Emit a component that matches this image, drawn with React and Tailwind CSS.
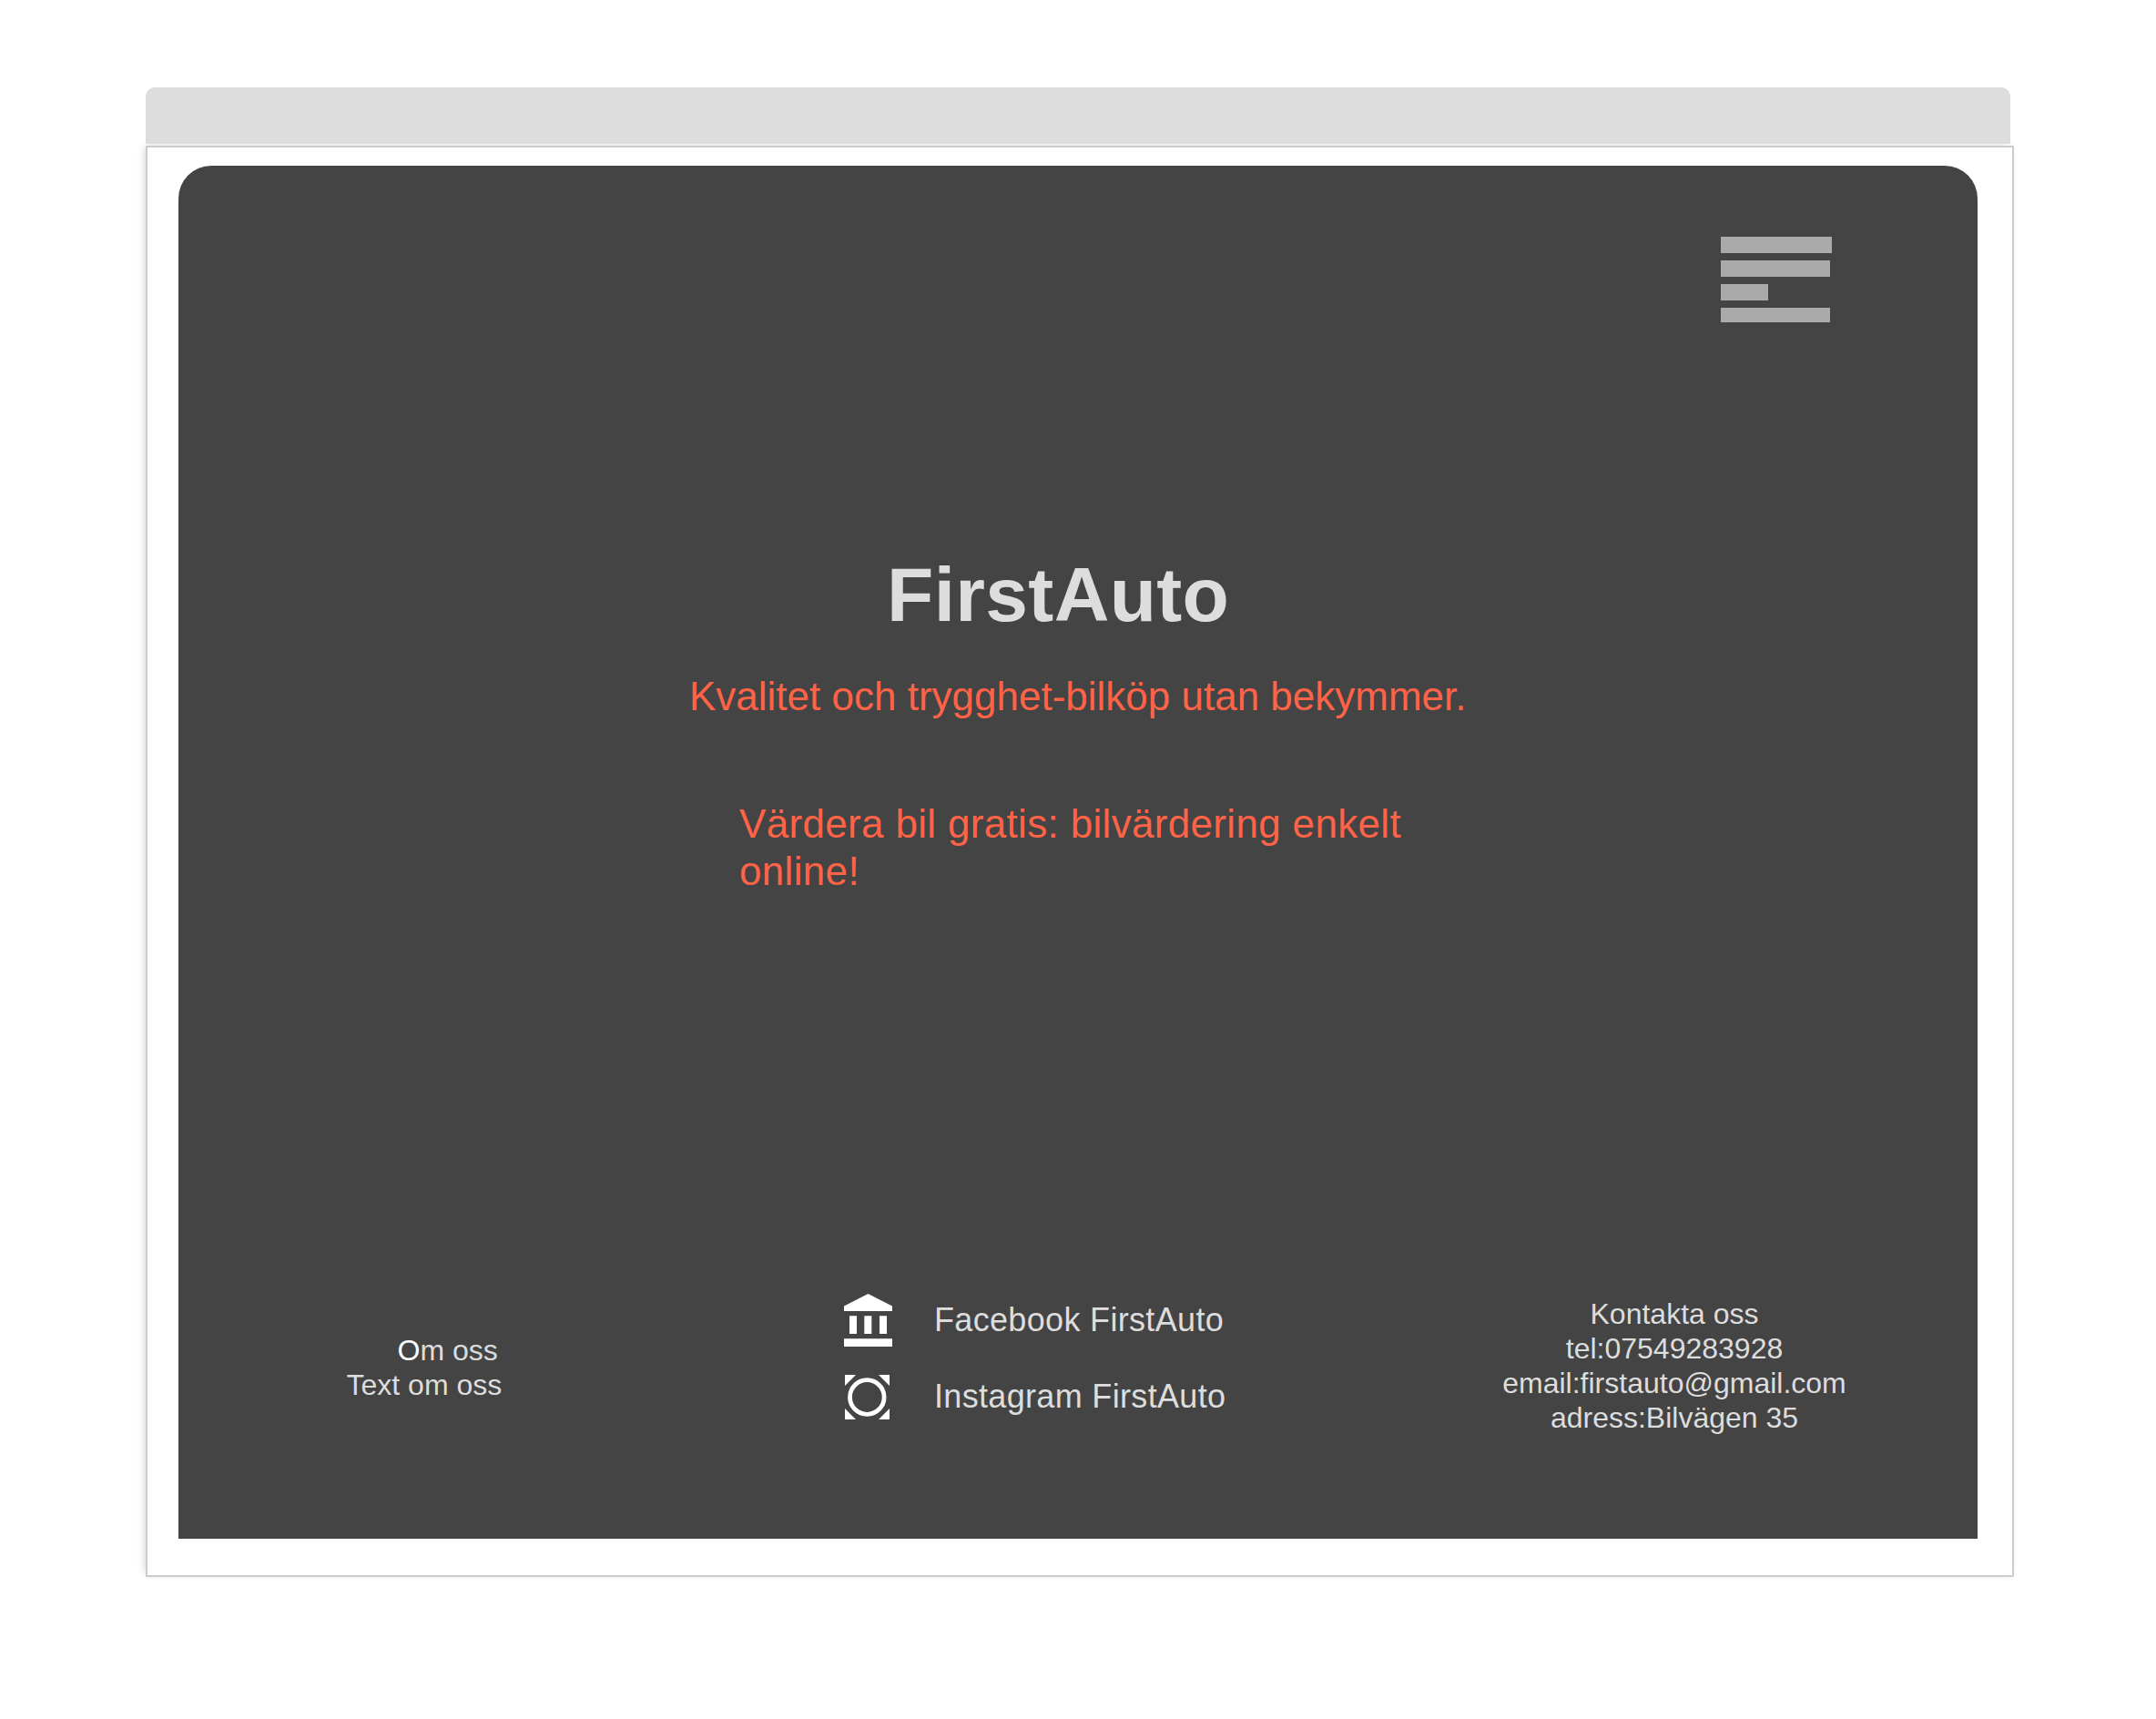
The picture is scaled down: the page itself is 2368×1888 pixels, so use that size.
function MenuBars() {
  return (
    <div className="flex h-[94px] w-[122px] flex-col gap-2">
      <div className="h-[18px] w-[122px] bg-[#aaaaaa]" />
      <div className="h-[18px] w-[120px] bg-[#aaaaaa]" />
      <div className="h-[18px] w-[52px] bg-[#aaaaaa]" />
      <div className="h-4 w-[120px] bg-[#aaaaaa]" />
    </div>
  );
}

function BankIcon() {
  return (
    <svg className="block h-[58px] w-[53px]" viewBox="0 0 53 58" fill="#ffffff">
      <path d="M26.5 0 53 13.5V19H0V13.5Z" />
      <path d="M6 24.3h8V44H6ZM22.3 24.3h8V44h-8ZM39 24.3h8V44h-8Z" />
      <path d="M0 49.3h53V58H0Z" />
    </svg>
  );
}

function CircleFrameIcon() {
  return (
    <svg className="block h-[49px] w-[49px]" viewBox="0 0 49 49" fill="#ffffff">
      <path d="M0 0h12L0 12ZM49 0v12L37 0ZM0 49V37l12 12ZM49 49H37l12-12Z" />
      <circle cx="24.3" cy="24.5" r="18.8" fill="none" stroke="#ffffff" strokeWidth="4.8" />
    </svg>
  );
}

export default function App() {
  return (
    <div className="h-[1888px] w-[2368px] bg-white px-40 pt-24 font-['Liberation_Sans',Arial,sans-serif] text-[#dddddd]">
      <div className="relative z-10 h-[62px] w-[2048px] rounded-t-[10px] bg-[#dddddd]" />
      <div className="mt-0.5 h-[1572px] w-[2052px] border-2 border-[#cccccc] bg-white pl-[34px] pt-5 shadow-[-4px_-2px_10px_-4px_rgba(0,0,0,0.18),0_0_6px_rgba(0,0,0,0.04)]">
        <main className="flex h-[1508px] w-[1976px] flex-col rounded-t-[36px] bg-[#444444]">
          <header className="flex justify-end pr-[160px] pt-[78px]">
            <MenuBars />
          </header>
          <section className="mt-[251px] h-[431px]">
            <h1 className="ml-[778px] h-[96px] whitespace-nowrap text-[84px] font-bold leading-[96px] tracking-[0.33px]">FirstAuto</h1>
            <p className="ml-[561px] mt-[38px] whitespace-nowrap text-[44px] leading-[52px] text-[#ff6347]">
              Kvalitet och trygghet-bilköp utan bekymmer.
            </p>
            <p className="ml-[616px] mt-[88px] w-[780px] text-[44px] leading-[52px] tracking-[0.33px] text-[#ff6347]">
              Värdera bil gratis: bilvärdering enkelt
              <br />
              online!
            </p>
          </section>
          <footer className="mt-[370px] flex">
            <div className="ml-[184px] mt-[58px] w-[172px] whitespace-nowrap text-[32px] leading-[38px]">
              <p className="pl-[56.5px]">
                <span className="text-white">O</span>m oss
              </p>
              <p className="pl-[0.5px]">Text om oss</p>
            </div>
            <div className="ml-[375px] mt-[15px] w-[430px]">
              <div className="flex h-[58px]">
                <BankIcon />
                <span className="ml-[46px] mt-[8px] whitespace-nowrap text-[36px] leading-[42px] tracking-[0.33px]">
                  Facebook FirstAuto
                </span>
              </div>
              <div className="ml-[1px] mt-[31px] flex h-[49px]">
                <CircleFrameIcon />
                <span className="ml-[49px] mt-[3px] whitespace-nowrap text-[36px] leading-[42px] tracking-[0.33px]">
                  Instagram FirstAuto
                </span>
              </div>
            </div>
            <div className="ml-[282px] mt-[18px] w-[400px] whitespace-nowrap text-center text-[32px] leading-[38px]">
              <p>Kontakta oss</p>
              <p>tel:07549283928</p>
              <p>email:firstauto@gmail.com</p>
              <p>adress:Bilvägen 35</p>
            </div>
          </footer>
        </main>
      </div>
    </div>
  );
}
